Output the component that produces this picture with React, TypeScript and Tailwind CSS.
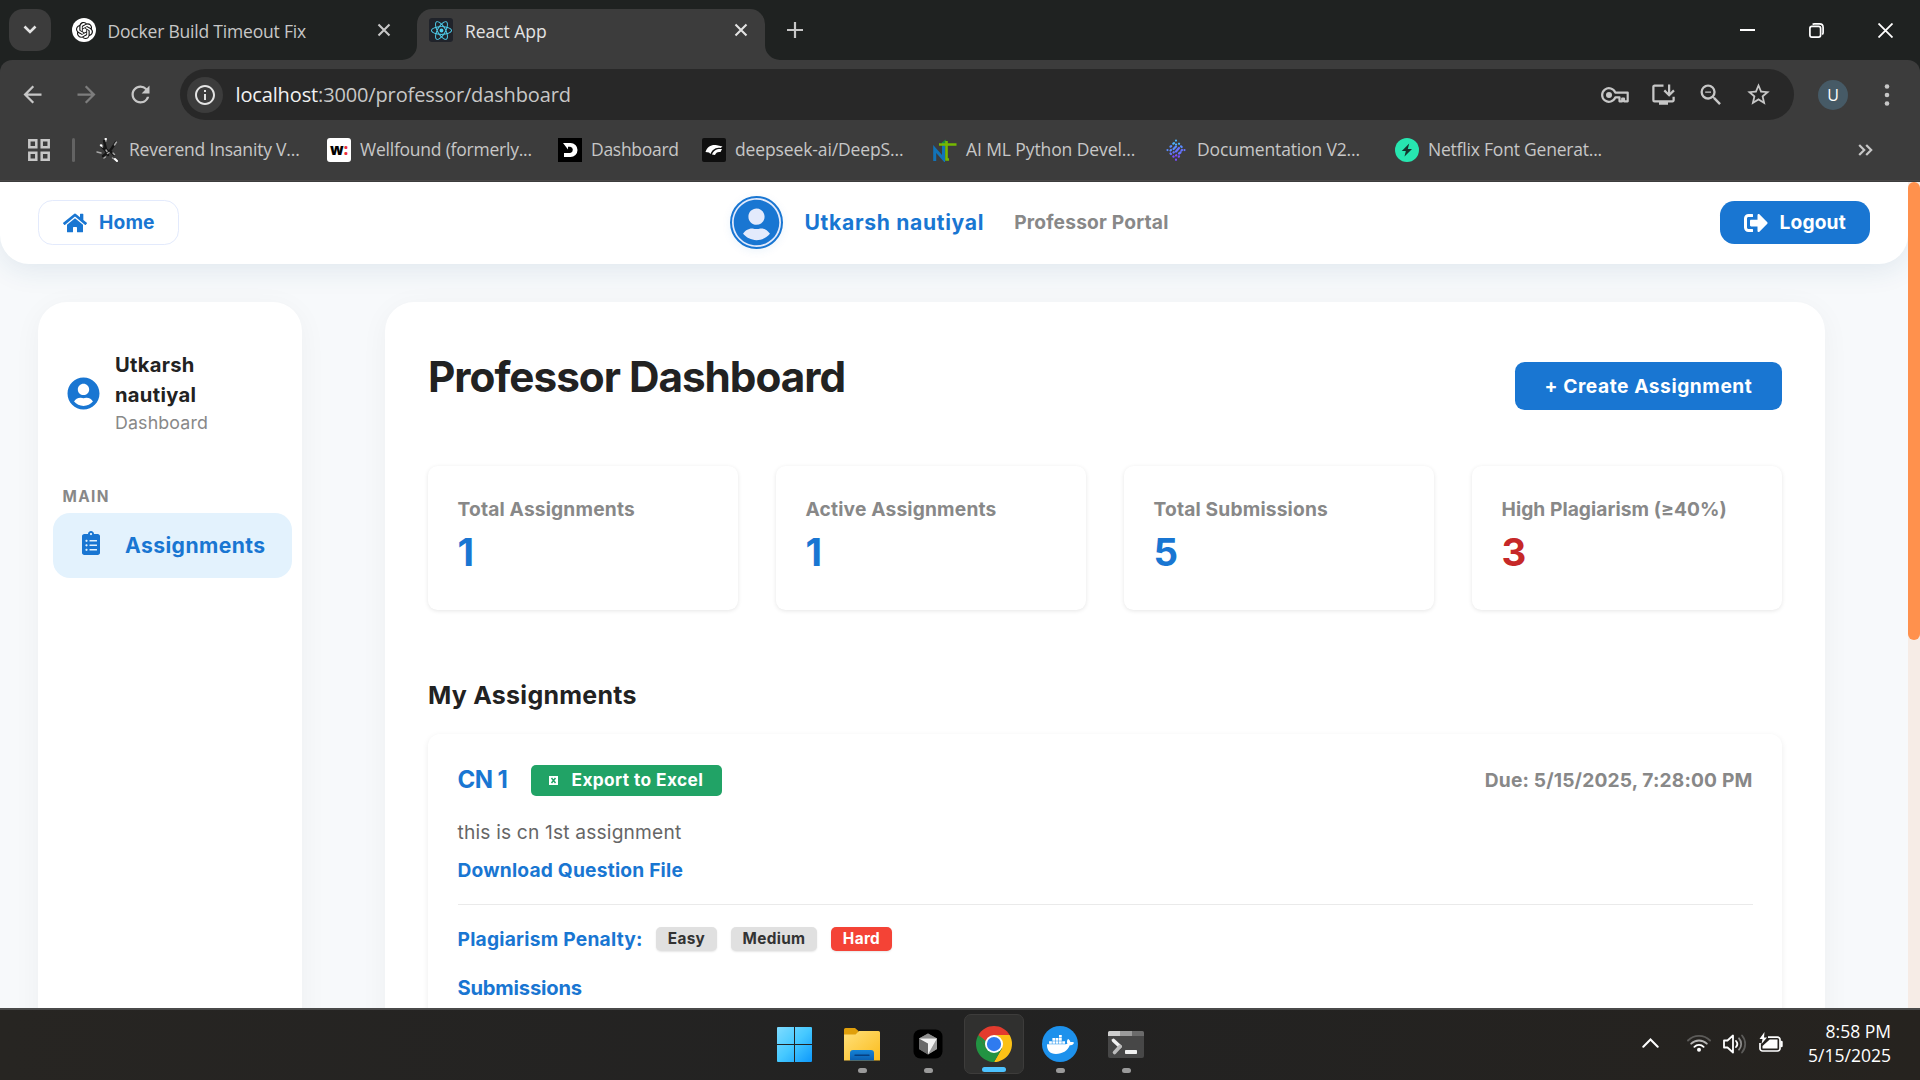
import React from "react";
import { FaHome, FaUserCircle, FaSignOutAlt, FaClipboardList, FaDocker } from "react-icons/fa";
import { MdArrowBack, MdArrowForward, MdRefresh, MdInfoOutline, MdInstallDesktop, MdZoomOut, MdStarBorder } from "react-icons/md";
import { SiOpenai, SiReact } from "react-icons/si";

const CloseIcon = ({ className = "" }: { className?: string }) => (
  <svg viewBox="0 0 14 14" className={"h-[14px] w-[14px] " + className} fill="none" stroke="currentColor" strokeWidth="2.1">
    <path d="M1.5 1.5l11 11M12.5 1.5l-11 11" />
  </svg>
);

/* ---------- browser ---------- */

function TabStrip() {
  return (
    <div className="flex h-[60px] items-start bg-[#1f2221] text-[17.5px] text-[#c7c7c7]">
      <div className="mt-[9px] ml-[9px] flex h-[42px] w-[42px] items-center justify-center rounded-[14px] bg-[#3c3c3c]">
        <svg viewBox="0 0 14 10" className="h-[10px] w-[14px]" fill="none" stroke="#e3e3e3" strokeWidth="2.6">
          <path d="M1.5 1.5L7 7l5.500-5.500" />
        </svg>
      </div>
      <div className="ml-[21px] flex h-[60px] w-[345px] items-center">
        <span className="flex h-6 w-6 items-center justify-center rounded-full bg-white">
          <SiOpenai className="text-[17px] text-[#111]" />
        </span>
        <span className="ml-[11.500px] flex-1 pt-[2px] tracking-[-0.2px]">Docker Build Timeout Fix</span>
        <CloseIcon className="mr-[26px]" />
      </div>
      <div className="relative mt-[9px] flex h-[51px] w-[348px] items-center rounded-t-[15px] bg-[#3c3c3c] pb-[9px] pl-[12px] text-[#e3e3e3]">
        <svg viewBox="0 0 15 15" className="absolute bottom-0 -left-[15px] h-[15px] w-[15px]">
          <path d="M15 0v15H0A15 15 0 0 0 15 0z" fill="#3c3c3c" />
        </svg>
        <svg viewBox="0 0 15 15" className="absolute -right-[15px] bottom-0 h-[15px] w-[15px]">
          <path d="M0 0v15h15A15 15 0 0 1 0 0z" fill="#3c3c3c" />
        </svg>
        <span className="flex h-6 w-6 items-center justify-center rounded-[3px] bg-[#20232a]">
          <SiReact className="text-[21px] text-[#4fd0ee]" />
        </span>
        <span className="ml-[12px] flex-1 pt-[2px] tracking-[-0.050px]">React App</span>
        <CloseIcon className="mr-[17px]" />
      </div>
      <div className="ml-[22px] flex h-[60px] items-center">
        <svg viewBox="0 0 16 16" className="h-4 w-4" stroke="#c7c7c7" strokeWidth="2.200">
          <path d="M8 0v16M0 8h16" />
        </svg>
      </div>
      <div className="mr-[27px] ml-auto flex h-[60px] items-center gap-[54px]">
        <svg viewBox="0 0 15 15" className="h-[15px] w-[15px]" stroke="#fff" strokeWidth="2"><path d="M0 7h15" /></svg>
        <svg viewBox="0 0 15 15" className="h-[15px] w-[15px]" fill="none" stroke="#fff" strokeWidth="1.700">
          <rect x="0.900" y="3.400" width="10.700" height="10.700" rx="2" />
          <path d="M3.600 1.500Q4.200.900 5.500.900H10.500Q14.100.900 14.100 4.500V9.500Q14.100 10.900 13.300 11.500" />
        </svg>
        <svg viewBox="0 0 15 15" className="h-[15px] w-[15px]" stroke="#fff" strokeWidth="1.800"><path d="M.5.5l14 14M14.500.5l-14 14" /></svg>
      </div>
    </div>
  );
}

function Toolbar() {
  return (
    <div className="bg-[#1f2221]">
      <div className="flex h-[60px] items-start rounded-t-[12px] bg-[#3c3c3c] pt-[9px]">
        <div className="flex h-[51px] w-[180px] items-center gap-[27px] pl-[19px] text-[27px] text-[#c7c7c7]">
          <MdArrowBack />
          <MdArrowForward className="text-[#7d7d7d]" />
          <MdRefresh />
        </div>
        <div className="flex h-[51px] w-[1614px] items-center rounded-full bg-[#282828] pr-[22px] pl-[7px] text-[#c7c7c7]">
          <span className="flex h-9 w-9 items-center justify-center rounded-full bg-[#3c3c3c]">
            <MdInfoOutline className="text-[24px] text-[#e3e3e3]" />
          </span>
          <span className="ml-[12.500px] flex-1 text-[20px] leading-[50px] tracking-[-0.140px]">
            <span className="text-[#f1f1f1]">localhost</span>:3000/professor/dashboard
          </span>
          <svg viewBox="0 0 28 16" className="mr-[21px] h-4 w-7" fill="none" stroke="currentColor" strokeWidth="2.200">
            <path d="M14.300 5.600A6.800 6.800 0 1 0 14.300 10.400H18.500V14.300H21.200V11.500H23V14.300H26.700V5.600z" strokeLinejoin="round" />
            <circle cx="8" cy="8" r="3" fill="currentColor" stroke="none" />
          </svg>
          <MdInstallDesktop className="mr-[20px] text-[27px]" />
          <MdZoomOut className="mr-[20px] text-[28px]" />
          <MdStarBorder className="text-[27px]" />
        </div>
        <span className="mt-[11px] ml-[24px] flex h-[30px] w-[30px] items-center justify-center rounded-full bg-[#465a66] pb-px text-[16px] text-white">U</span>
        <svg viewBox="0 0 6 24" className="mt-[14px] ml-[36px] h-6 w-[6px]" fill="#c7c7c7">
          <circle cx="3" cy="3.500" r="2.300" /><circle cx="3" cy="12" r="2.300" /><circle cx="3" cy="20.500" r="2.300" />
        </svg>
      </div>
    </div>
  );
}

const bookmarks = [
  {
    label: "Reverend Insanity V...", box: "w-[231px]", text: "tracking-[-0.19px]",
    icon: (
      <svg viewBox="0 0 24 24" className="h-6 w-6" fill="none" strokeLinecap="round">
        <path d="M6 9l3 3 3 5M8 3l2 8 3 3M20 4l-4 6-3 4M7 18l4-3 3-2 4 4" stroke="#151515" strokeWidth="2.400" />
        <path d="M1 14l4 1M5 8l1.500 1M9.500 1l.500 2M11.500 15.500l1.500-1M20.500 4l-2 3M17 15l1.500 1.500M16.500 20l3 2M8 20l1.500-1M10 12l1 1.500" stroke="#a8a8a8" strokeWidth="1.500" />
        <path d="M19 21l2 2M4.800 7.200l.700.300M9.500 1h.5" stroke="#fff" strokeWidth="2" />
      </svg>
    ),
  },
  {
    label: "Wellfound (formerly...", box: "w-[231px]", text: "tracking-[-0.23px]",
    icon: (
      <span className="flex h-6 w-6 items-center justify-center rounded-[3px] bg-white pb-[2px] text-[15px] leading-none font-extrabold text-black">
        w<span className="text-[#ec2e3a]">:</span>
      </span>
    ),
  },
  {
    label: "Dashboard", box: "w-[144px]", text: "tracking-[-0.28px]",
    icon: (
      <svg viewBox="0 0 24 24" className="h-6 w-6">
        <rect width="24" height="24" fill="#000" />
        <path d="M5 5h7.500a7 7 0 0 1 0 14H6v-4h6.200a3.200 3.200 0 0 0 0-6.300H10v2.800z" fill="#fff" />
      </svg>
    ),
  },
  {
    label: "deepseek-ai/DeepS...", box: "w-[231px]", text: "tracking-[-0.12px]",
    icon: (
      <svg viewBox="0 0 24 24" className="h-6 w-6">
        <rect width="24" height="24" rx="2" fill="#0f0f0f" />
        <path d="M3.500 14C5 8.500 10 6 15 7.200l5.500 1.300-2 1.500C13 9 10 12.500 8.500 16L7 14.500z" fill="#fff" />
        <path d="M10 16.500C11.500 12.500 14.500 10.500 20 11l-1.500 3c-3-.5-4.500.500-5.500 3z" fill="#fff" />
      </svg>
    ),
  },
  {
    label: "AI ML Python Devel...", box: "w-[231px]", text: "tracking-[-0.1px]",
    icon: (
      <svg viewBox="0 0 24 24" className="h-6 w-6" fill="none">
        <path d="M1.700 23V11L10.500 21V4" stroke="#1273b8" strokeWidth="3" />
        <path d="M8.500 5L12.500 1.500 14 5.500" fill="#1b8a3e" />
        <path d="M6 6.500H23.500M13.500 3v18.500h2.500" stroke="#76b900" strokeWidth="2.600" />
      </svg>
    ),
  },
  {
    label: "Documentation V2...", box: "w-[231px]", text: "tracking-[-0.15px]",
    icon: (
      <svg viewBox="0 0 24 24" className="h-6 w-6" strokeLinecap="round" strokeWidth="2.200">
        <path d="M12 2.500v.1M9.300 5.700l.7-.5M12 6.500l.1 0M15 5.700l.1.1" stroke="#4cb4ff" />
        <path d="M6.500 8.700l.7-.600M9.500 11l2.500-2.500M17 8.300l.700.700M3.500 12v.1M6.500 12.500l.500-.500" stroke="#5a8bff" />
        <path d="M12 13.500l3-3.500M17.500 12.500l.5-.5M20.500 12v.1M9.500 14.500l.3-.3M15 15.500l1.500-1M6.500 15.500l.5.5" stroke="#6673ff" />
        <path d="M9.300 18.500l.3.200M12 17.500l.3-.3M14.700 18.700l.3-.3M12 21.700v.1" stroke="#7a4dff" />
      </svg>
    ),
  },
  {
    label: "Netflix Font Generat...", box: "w-[231px]", text: "tracking-[-0.21px]",
    icon: (
      <svg viewBox="0 0 24 24" className="h-6 w-6">
        <circle cx="12" cy="12" r="12" fill="#27e6b0" />
        <path d="M14.200 5.500L6.800 13h4L9.500 18.500 17 11h-4.200z" fill="#14352d" />
      </svg>
    ),
  },
];

function BookmarksBar() {
  return (
    <div className="flex h-[62px] flex-col bg-[#3c3c3c]">
      <div className="flex h-[60px] items-center">
        <svg viewBox="0 0 22 22" className="ml-[28px] h-[22px] w-[22px]" fill="none" stroke="#c7c7c7" strokeWidth="2.500">
          <path d="M1.300 1.300h7v7h-7zM13.700 1.300h7v7h-7zM1.300 13.700h7v7h-7zM13.700 13.700h7v7h-7z" />
        </svg>
        <span className="mr-[21px] ml-[22px] h-6 w-[3px] rounded-full bg-[#636363]" />
        {bookmarks.map((b) => (
          <span key={b.label} className={"flex shrink-0 items-center " + b.box}>
            {b.icon}
            <span className={"mb-[2px] ml-[9px] text-[17.5px] leading-[24px] whitespace-nowrap text-[#c7c7c7] " + b.text}>{b.label}</span>
          </span>
        ))}
        <svg viewBox="0 0 15 12" className="mr-[47px] ml-auto h-3 w-[15px]" fill="none" stroke="#c7c7c7" strokeWidth="2.200">
          <path d="M1.200 1l5 5-5 5M8.200 1l5 5-5 5" />
        </svg>
      </div>
      <div className="h-px bg-[#484646]" />
    </div>
  );
}

/* ---------- page ---------- */

function PageHeader() {
  return (
    <header className="relative flex h-[82px] w-[1908px] shrink-0 items-center justify-between rounded-b-[29px] bg-white pr-[38px] pb-px pl-[38px] shadow-[0_5px_29px_rgba(25,80,130,0.11)]">
      <button className="flex h-[45px] w-[141px] items-center rounded-[14.400px] border border-[#e3eafc] pl-[23.500px] text-[19.200px] font-bold tracking-[0.150px] text-[#1976d2]">
        <FaHome className="h-[24px] w-[24px]" />
        <span className="ml-[12.500px]">Home</span>
      </button>
      <div className="flex items-center text-[#1976d2]">
        <span className="flex h-[53px] w-[53px] items-center justify-center rounded-full border-[2.400px] border-[#1976d2] bg-[#e3eafc] shadow-[0_2px_10px_rgba(25,118,210,0.08)]">
          <FaUserCircle className="h-[47px] w-[47px] shrink-0" />
        </span>
        <span className="ml-[21px] text-[21.120px] font-bold tracking-[0.680px]">Utkarsh nautiyal</span>
        <span className="ml-[30px] text-[19.200px] font-bold tracking-[0.180px] text-[#888]">Professor Portal</span>
      </div>
      <button className="flex h-[43px] w-[150px] items-center rounded-[14.400px] bg-[#1976d2] pl-[24px] text-[19.200px] font-bold tracking-[0.150px] text-white">
        <FaSignOutAlt className="h-[24px] w-[24px]" />
        <span className="ml-[11.500px]">Logout</span>
      </button>
    </header>
  );
}

function Sidebar() {
  return (
    <aside className="h-[760px] w-[264px] shrink-0 rounded-[29px] bg-white pt-[48px] shadow-[0_5px_29px_rgba(0,0,0,0.045)]">
      <div className="flex items-center pl-[29px]">
        <FaUserCircle className="h-[33px] w-[33px] text-[#1976d2]" />
        <div className="ml-[15px]">
          <div className="w-[100px] text-[20.160px] leading-[30px] font-bold tracking-[0.300px] text-[#222]">Utkarsh nautiyal</div>
          <div className="text-[17.800px] leading-[26px] tracking-[0.150px] text-[#888]">Dashboard</div>
        </div>
      </div>
      <div className="mt-[46px] pl-[24.500px] text-[15.360px] leading-[30px] font-bold tracking-[1.350px] text-[#888]">MAIN</div>
      <div className="mt-px ml-[15px] flex h-[65px] w-[239px] items-center rounded-[17px] bg-[#e3f2fd] pl-[26px] text-[21.120px] font-bold tracking-[0.430px] text-[#1976d2]">
        <FaClipboardList className="mb-[6px] h-[24px] w-[24px]" />
        <span className="ml-[22px]">Assignments</span>
      </div>
    </aside>
  );
}

const stats = [
  { label: "Total Assignments", value: "1", spacing: "tracking-[0.170px]", tone: "text-[#1976d2]" },
  { label: "Active Assignments", value: "1", spacing: "tracking-[0.170px]", tone: "text-[#1976d2]" },
  { label: "Total Submissions", value: "5", spacing: "tracking-[0.170px]", tone: "text-[#1976d2]" },
  { label: "High Plagiarism (≥40%)", value: "3", spacing: "tracking-[0.050px]", tone: "text-[#c62828]" },
];

const penalties = [
  { label: "Easy", style: "w-[61px] bg-[#e0e0e0] text-[#333]" },
  { label: "Medium", style: "w-[86px] bg-[#e0e0e0] text-[#333]" },
  { label: "Hard", style: "w-[61px] bg-[#f44336] text-white" },
];

function Dashboard() {
  return (
    <main className="h-[760px] w-[1440px] shrink-0 rounded-[29px] bg-white px-[43px] pt-[43px] shadow-[0_5px_29px_rgba(0,0,0,0.045)]">
      <div className="flex h-[65px] items-end justify-between">
        <h1 className="mb-px text-[42.240px] leading-[64px] font-bold tracking-[-1px] text-[#222]">Professor Dashboard</h1>
        <button className="h-[48px] w-[267px] rounded-[9.600px] bg-[#1976d2] text-[19.200px] font-bold tracking-[0.550px] text-white">+ Create Assignment</button>
      </div>
      <div className="mt-[56px] grid grid-cols-4 gap-[38px]">
        {stats.map((s) => (
          <div key={s.label} className="h-[144px] rounded-[9.600px] bg-white px-[29.500px] pt-[29px] shadow-[0_1px_4px_rgba(0,0,0,0.1)]">
            <div className={"text-[19.200px] leading-[28px] font-bold whitespace-nowrap text-[#888] " + s.spacing}>{s.label}</div>
            <div className={"text-[38.400px] leading-[58px] font-bold " + s.tone}>{s.value}</div>
          </div>
        ))}
      </div>
      <h2 className="mt-[67px] text-[24.960px] leading-[36px] font-bold tracking-[0.270px] text-[#222]">My Assignments</h2>
      <div className="mt-[21px] h-[360px] rounded-[12px] bg-white px-[29.500px] pt-[29px] shadow-[0_2px_6px_rgba(0,0,0,0.08)]">
        <div className="flex h-[34px] items-center">
          <span className="w-[73.500px] text-[24px] font-bold tracking-[-0.600px] text-[#1976d2]">CN 1</span>
          <button className="flex h-[31px] w-[191px] items-center rounded-[5px] bg-[#21a366] pl-[18px] text-[17.280px] font-bold tracking-[0.400px] text-white">
            <svg viewBox="0 0 9 9" className="h-[9px] w-[9px]">
              <rect width="9" height="9" fill="#fff" />
              <path d="M2.500 2l4 5M6.500 2l-4 5" stroke="#21a366" strokeWidth="1.500" />
            </svg>
            <span className="ml-[13.500px] pb-px">Export to Excel</span>
          </button>
          <span className="ml-auto text-[19.200px] font-bold tracking-[0.150px] text-[#888]">Due: 5/15/2025, 7:28:00 PM</span>
        </div>
        <p className="mt-[20px] text-[19.200px] leading-[30px] tracking-[0.170px] text-[#666]">this is cn 1st assignment</p>
        <p className="mt-[8px] text-[19.200px] leading-[30px] font-bold tracking-[0.200px] text-[#1976d2]">Download Question File</p>
        <div className="mt-[19px] h-px bg-[#eaeaea]" />
        <div className="mt-[22px] flex h-[24px] items-center gap-[14px]">
          <span className="w-[184.500px] text-[19.200px] leading-[23px] font-bold tracking-[0.230px] whitespace-nowrap text-[#1976d2]">Plagiarism Penalty:</span>
          {penalties.map((p) => (
            <span key={p.label} className={"h-[24px] rounded-[5px] text-center text-[15.360px] leading-[23px] font-bold tracking-[0.330px] shadow-[0_1px_2px_rgba(0,0,0,0.1)] " + p.style}>{p.label}</span>
          ))}
        </div>
        <div className="mt-[22px] text-[20.160px] leading-[30px] font-bold tracking-[-0.200px] text-[#1976d2]">Submissions</div>
      </div>
    </main>
  );
}

function Page() {
  return (
    <div className="flex h-[826px] overflow-hidden bg-[#f7f9fb] font-['Inter',sans-serif]">
      <div className="flex w-[1908px] shrink-0 flex-col overflow-hidden">
        <PageHeader />
        <div className="mt-[38px] flex gap-[83px] pl-[38px]">
          <Sidebar />
          <Dashboard />
        </div>
      </div>
      <div className="w-[12px] bg-[#f6ece6]">
        <div className="h-[458px] rounded-full bg-[#ff914d]" />
      </div>
    </div>
  );
}

/* ---------- taskbar ---------- */

const WindowsLogo = () => (
  <svg viewBox="0 0 35 35" className="mr-[3px] h-[35px] w-[35px]">
    <defs>
      <linearGradient id="win" x1="0" y1="0" x2="1" y2="1" gradientUnits="objectBoundingBox">
        <stop offset="0" stopColor="#7fdcff" /><stop offset="0.5" stopColor="#45c8ff" /><stop offset="1" stopColor="#0d98fb" />
      </linearGradient>
    </defs>
    <path d="M1 0h16v17H0V1a1 1 0 0 1 1-1zM18 0h16a1 1 0 0 1 1 1v16H18zM0 18h17v17H1a1 1 0 0 1-1-1zM18 18h17v16a1 1 0 0 1-1 1H18z" fill="url(#win)" />
  </svg>
);

const FolderLogo = () => (
  <svg viewBox="0 0 36 36" className="h-9 w-9">
    <defs>
      <linearGradient id="fold" x1="0" y1="0" x2="1" y2="1"><stop offset="0" stopColor="#ffe07a" /><stop offset="1" stopColor="#fbbc1c" /></linearGradient>
      <linearGradient id="tray" x1="0" y1="0" x2="0" y2="1"><stop offset="0" stopColor="#1483d8" /><stop offset="1" stopColor="#0b5fb0" /></linearGradient>
    </defs>
    <path d="M0 3.500a1.500 1.500 0 0 1 1.500-1.500H11l3.500 3v5H0z" fill="#e09f0b" />
    <path d="M0 8.500h11.500l3.500-3.500h19.500a1.500 1.500 0 0 1 1.500 1.500V34.500H0z" fill="url(#fold)" />
    <path d="M6 34.500V27a3 3 0 0 1 3-3h18a3 3 0 0 1 3 3v7.500z" fill="url(#tray)" />
    <path d="M11 29.200h14" stroke="#063f80" strokeWidth="1.400" strokeLinecap="round" />
  </svg>
);

const CubeLogo = () => (
  <svg viewBox="0 0 30 30" className="h-[30px] w-[30px]">
    <rect x="0.500" y="0.500" width="29" height="29" rx="7" fill="#000" />
    <path d="M15 4.500l9 5v10.500l-9 5.500-9-5.500V9.500z" fill="#777" />
    <path d="M15 4.500l9 5H6z" fill="#8d8d8d" />
    <path d="M6 9.500l9 5v11l-9-5.500z" fill="#6a6a6a" />
    <path d="M24 9.500v10.500l-9 5.500z" fill="#9a9a9a" />
    <path d="M6 9.500h18L15 25.500V14.500z" fill="#f2f2f2" />
  </svg>
);

const ChromeLogo = () => (
  <svg viewBox="0 0 48 48" className="h-9 w-9">
    <path d="M24 24L3.220 12A24 24 0 0 1 44.780 12z" fill="#e33b2e" />
    <path d="M24 24V12H44.780A24 24 0 0 1 24 48L34.400 30z" fill="#fbc116" />
    <path d="M24 24L34.400 30 24 48A24 24 0 0 1 3.220 12L13.600 30z" fill="#229342" />
    <path d="M3.220 12L13.600 30 24 24V12z" fill="#e33b2e" />
    <path d="M3.220 12L13.600 30 18 24z" fill="#229342" />
    <circle cx="24" cy="24" r="12" fill="#fff" />
    <circle cx="24" cy="24" r="9.500" fill="#2f7bef" />
  </svg>
);

const DockerLogo = () => (
  <span className="flex h-9 w-9 items-center justify-center rounded-full bg-[#1d91ec] text-white">
    <FaDocker className="h-[27px] w-[27px]" />
  </span>
);

const TerminalLogo = () => (
  <svg viewBox="0 0 36 27" className="h-[27px] w-9">
    <path d="M0 5h36v20a2 2 0 0 1-2 2H2a2 2 0 0 1-2-2z" fill="#474747" />
    <path d="M0 5V1.500A1.500 1.500 0 0 1 1.500 0H12v5z" fill="#cfcfcf" />
    <path d="M12 0h12v5H12z" fill="#9b9b9b" />
    <path d="M24 0h10.500A1.500 1.500 0 0 1 36 1.500V5H24z" fill="#6b6b6b" />
    <path d="M5.500 9.500l6.500 6" stroke="#f2f2f2" strokeWidth="3.600" strokeLinecap="round" />
    <path d="M12 15.500l-5.500 6" stroke="#bdbdbd" strokeWidth="3.600" strokeLinecap="round" />
    <rect x="17" y="19" width="12" height="4" rx="0.800" fill="#f0f0f0" />
  </svg>
);

const apps = [
  { name: "start", icon: <WindowsLogo />, mark: "" },
  { name: "files", icon: <FolderLogo />, mark: "w-[9px] bg-[#9a9a9a]" },
  { name: "editor", icon: <CubeLogo />, mark: "w-[9px] bg-[#9a9a9a]" },
  { name: "browser", icon: <ChromeLogo />, mark: "w-[24px] bg-[#4cc2ff]", active: true },
  { name: "docker", icon: <DockerLogo />, mark: "w-[9px] bg-[#9a9a9a]" },
  { name: "terminal", icon: <TerminalLogo />, mark: "w-[9px] bg-[#9a9a9a]" },
];

function Taskbar() {
  return (
    <footer className="flex h-[72px] justify-between border-t-2 border-[#4a4a4a] bg-[#252422] bg-linear-to-r from-[#272522] via-[#222222] to-[#26231f]">
      <div className="ml-[763px] flex pt-[4px]">
        {apps.map((a) => (
          <div key={a.name} className="flex w-[66px] justify-center">
            <div className={"relative flex h-[60px] w-[60px] items-center justify-center rounded-[7px] " + (a.active ? "border border-[#3d3c3b] bg-[#30302f]" : "")}>
              {a.icon}
              {a.mark && <span className={"absolute bottom-[1px] h-[5px] rounded-full " + a.mark} />}
            </div>
          </div>
        ))}
      </div>
      <div className="mr-[29px] flex items-start pt-[9px] text-white">
        <svg viewBox="0 0 17 10" className="mt-[19px] mr-[28px] h-[10px] w-[17px]" fill="none" stroke="#fff" strokeWidth="2" strokeLinecap="round">
          <path d="M1.300 8.700l7.200-7.200 7.200 7.200" />
        </svg>
        <svg viewBox="0 0 24 18" className="mt-[15px] mr-[12px] h-[18px] w-6" fill="none" strokeWidth="1.900" strokeLinecap="round">
          <path d="M1 6.500a15.500 15.500 0 0 1 22 0" stroke="#5c5b59" />
          <path d="M4.200 9.700a11 11 0 0 1 15.600 0" stroke="#b5b4b3" />
          <path d="M7.400 12.800a6.500 6.500 0 0 1 9.200 0" stroke="#fff" />
          <circle cx="12" cy="15.700" r="2" fill="#fff" />
        </svg>
        <svg viewBox="0 0 24 20" className="mt-[15px] mr-[12px] h-5 w-6" fill="none" stroke="#fff" strokeWidth="1.800" strokeLinecap="round" strokeLinejoin="round">
          <path d="M1 6.500h3.500L10 1.500v17L4.500 13.500H1z" />
          <path d="M13 7a4.500 4.500 0 0 1 0 6" />
          <path d="M16 4.300a8.500 8.500 0 0 1 0 11.400" stroke="#8b8a89" />
          <path d="M19 1.500a13 13 0 0 1 0 17" stroke="#5c5b59" />
        </svg>
        <svg viewBox="0 0 24 20" className="mt-[13px] mr-[25px] h-5 w-6" fill="none" stroke="#fff" strokeWidth="1.700">
          <path d="M9 5.200h9.500a2.500 2.500 0 0 1 2.500 2.500v8.800a2.500 2.500 0 0 1-2.500 2.500H3.500A2.500 2.500 0 0 1 1 16.500V11" />
          <path d="M10.700 7.600h7.800v9H3.500V14z" fill="#fff" stroke="none" />
          <path d="M5.500 0L.500 7h3L2.500 12 8 5.500H5z" fill="#fff" stroke="none" />
          <path d="M22.500 10v4" strokeWidth="2.400" strokeLinecap="round" />
        </svg>
        <div className="text-right text-[17.500px] leading-[24px]">
          <div>8:58 PM</div>
          <div>5/15/2025</div>
        </div>
      </div>
    </footer>
  );
}

export default function App() {
  return (
    <div className="flex h-[1080px] w-[1920px] flex-col overflow-hidden font-['Open_Sans','Noto_Sans',sans-serif]">
      <TabStrip />
      <Toolbar />
      <BookmarksBar />
      <Page />
      <Taskbar />
    </div>
  );
}
